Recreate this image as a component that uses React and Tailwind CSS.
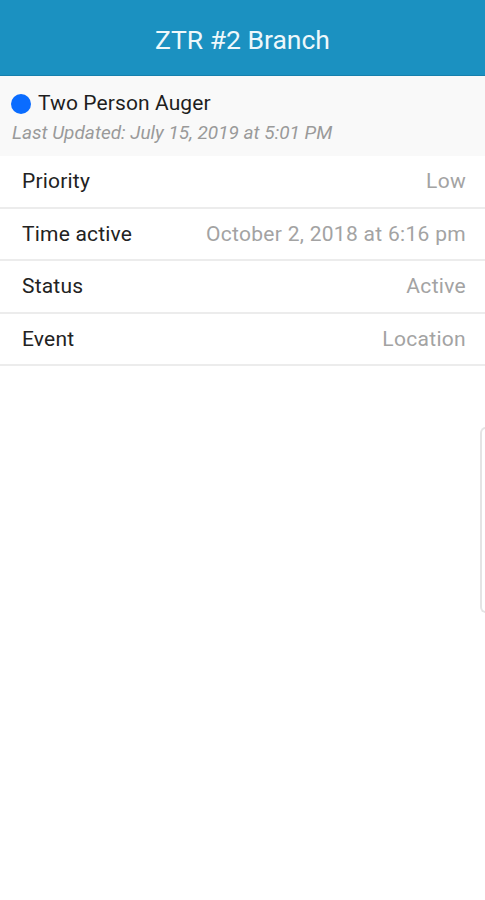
import React from "react";

const rows = [
  ["Priority", "Low"],
  ["Time active", "October 2, 2018 at 6:16 pm"],
  ["Status", "Active"],
  ["Event", "Location"],
];

export default function App() {
  return (
    <div className="relative w-[485px] h-[900px] bg-white overflow-hidden" style={{ fontFamily: "Roboto, 'Noto Sans', sans-serif" }}>
      <div className="h-[76px] bg-[#1b91c1] flex items-center justify-center border-b border-[#1680ad] pt-[4px]">
        <span className="text-[26.5px] text-[#eef8fb]">ZTR #2 Branch</span>
      </div>
      <div className="h-[80px] bg-[#f9f9f9] pl-[11px] pt-[14px]">
        <div className="flex items-center gap-[7px] h-[28px]">
          <span className="w-[20px] h-[20px] rounded-full bg-[#0a6cff]" />
          <span className="text-[21px] text-[#1e1e1e] tracking-[0.1px]">Two Person Auger</span>
        </div>
        <div className="mt-[1px] pl-[1px] text-[19px] italic text-[#9a9a9a]">Last Updated: July 15, 2019 at 5:01 PM</div>
      </div>
      <div>
        {rows.map(([k, v]) => (
          <div key={k} className="h-[52.5px] flex items-center justify-between pl-[22px] pr-[19px] border-b-2 border-[#ececec] pt-[1px]">
            <span className="text-[21px] text-[#222] tracking-[0.2px]">{k}</span>
            <span className="text-[21px] text-[#a3a3a3] tracking-[0.3px]">{v}</span>
          </div>
        ))}
      </div>
      <div className="absolute left-[480px] top-[427px] w-[20px] h-[186px] rounded-l-[6px] border-l-2 border-t-2 border-b-2 border-[#e4e4e4] bg-white" />
    </div>
  );
}
